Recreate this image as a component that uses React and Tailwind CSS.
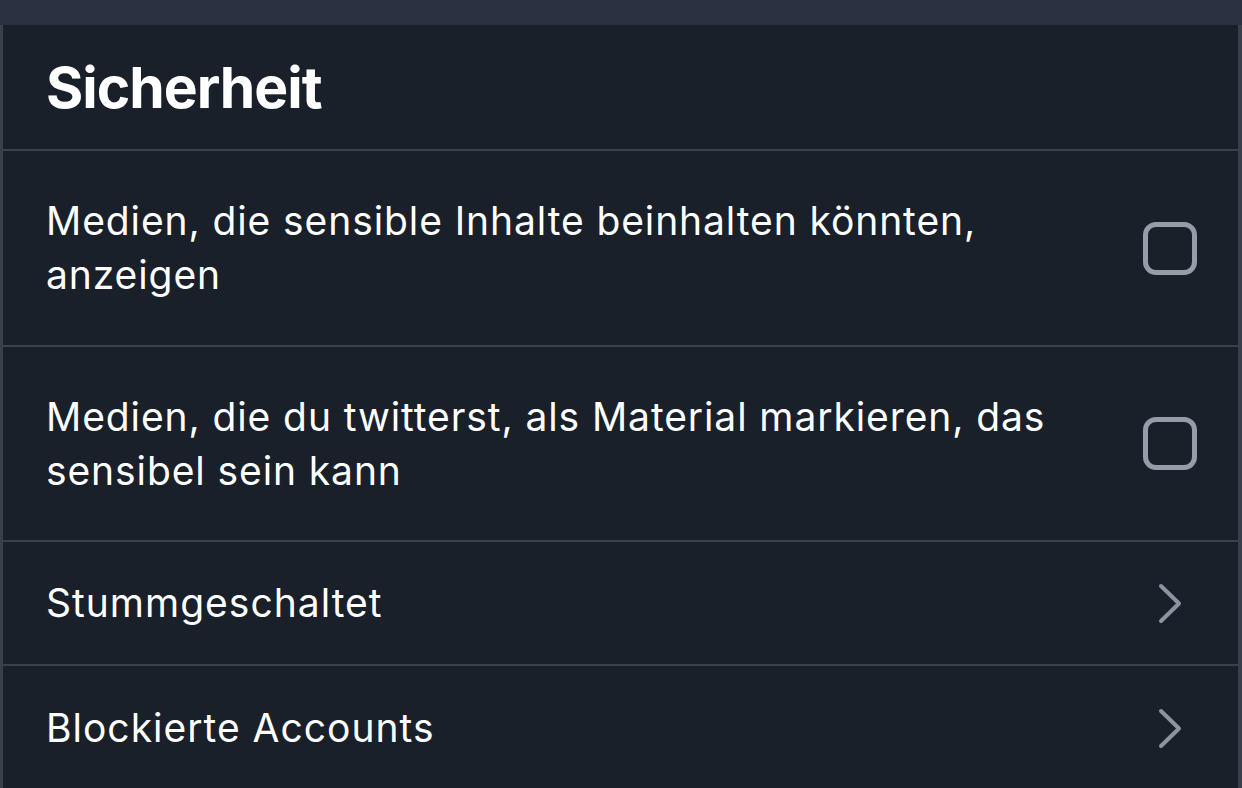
const font = { fontFamily: 'Inter, "Noto Sans", sans-serif' };

function CheckRow({ children, height }) {
  return (
    <div className={`flex ${height} items-center justify-between border-b-2 border-[#3b414b] pl-[43px] pr-[41px]`}>
      <p className="text-[39px] leading-[54px] tracking-[0.9px] text-white">{children}</p>
      <div className="h-[53px] w-[54px] shrink-0 rounded-[13px] border-[5px] border-[#959ea8]" />
    </div>
  );
}

function LinkRow({ label, last }) {
  return (
    <div className={`flex h-[124px] items-center justify-between pl-[43px] pr-[56px] ${last ? '' : 'border-b-2 border-[#3b414b]'}`}>
      <p className="text-[39px] leading-[54px] tracking-[1px] text-white">{label}</p>
      <svg width="24" height="41" viewBox="0 0 24 41" fill="none">
        <path d="M3 3 L21 20.5 L3 38" stroke="#8c959f" strokeWidth="4" strokeLinecap="round" strokeLinejoin="round" />
      </svg>
    </div>
  );
}

export default function App() {
  return (
    <div className="flex h-[788px] w-[1242px] flex-col overflow-hidden bg-[#2a3140]" style={font}>
      <div className="h-[25px] shrink-0" />
      <div className="flex flex-1 flex-col border-l-[3px] border-r-4 border-[#3a404b] bg-[#19202a]">
        <div className="flex h-[126px] shrink-0 items-center border-b-2 border-[#3b414b] pl-[43px]">
          <h1 className="text-[57px] font-bold leading-none tracking-[-1px] text-white">Sicherheit</h1>
        </div>
        <CheckRow height="h-[196px]">
          Medien, die sensible Inhalte beinhalten könnten,
          <br />
          anzeigen
        </CheckRow>
        <CheckRow height="h-[195px]">
          Medien, die du twitterst, als Material markieren, das
          <br />
          sensibel sein kann
        </CheckRow>
        <LinkRow label="Stummgeschaltet" />
        <LinkRow label="Blockierte Accounts" last />
      </div>
    </div>
  );
}
